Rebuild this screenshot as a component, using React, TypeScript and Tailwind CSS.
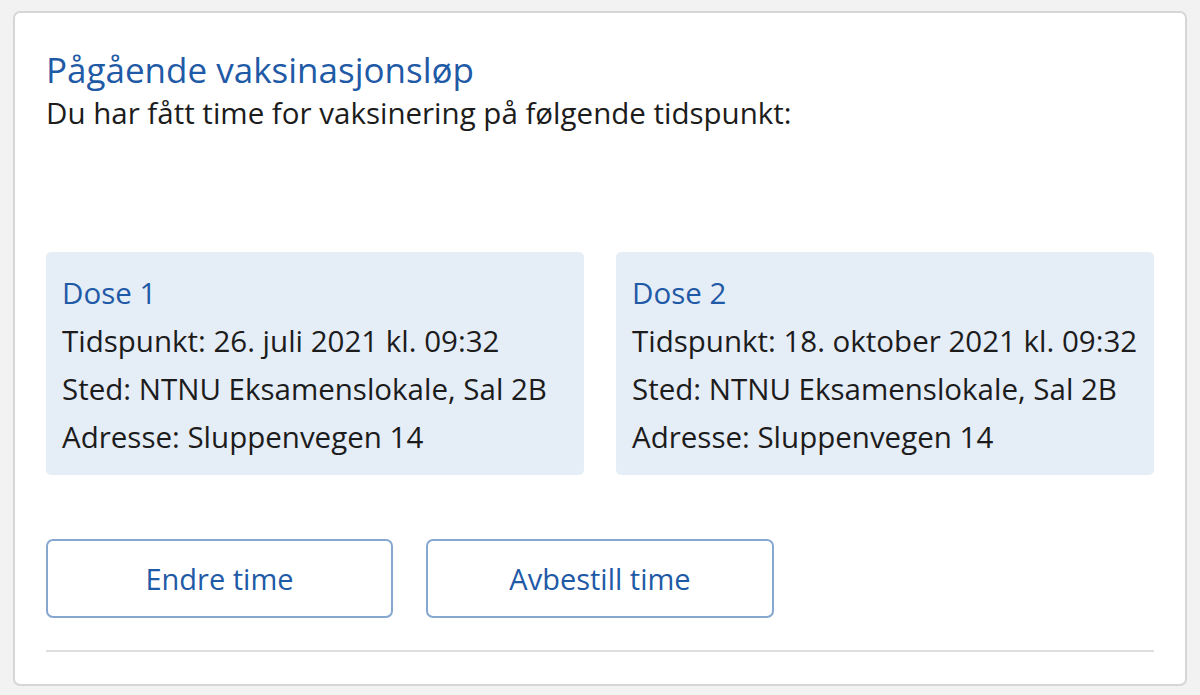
export default function App() {
  const doses = [
    { title: "Dose 1", time: "Tidspunkt: 26. juli 2021 kl. 09:32" },
    { title: "Dose 2", time: "Tidspunkt: 18. oktober 2021 kl. 09:32" },
  ];
  return (
    <div
      className="w-[1200px] h-[695px] bg-[#f2f2f2] pt-[11px] pl-[13px] pr-[13px] pb-[9px]"
      style={{ fontFamily: "'Open Sans', 'Noto Sans', sans-serif" }}
    >
      <div className="h-full bg-white border-2 border-[#d6d6d6] rounded-[7px] px-[31px] pt-[36px]">
        <h1 className="text-[35px] leading-[42px] text-[#1f5aa6]">Pågående vaksinasjonsløp</h1>
        <p className="text-[29.5px] leading-[44px] text-[#1c1c1c]">
          Du har fått time for vaksinering på følgende tidspunkt:
        </p>
        <div className="mt-[117px] grid grid-cols-2 gap-[32px]">
          {doses.map((d) => (
            <div key={d.title} className="bg-[#e5edf7] rounded-[5px] px-[16px] pt-[17px] pb-[14px] text-[29.5px] leading-[48px] text-[#1c1c1c]">
              <div className="text-[#1f5aa6]">{d.title}</div>
              <div>{d.time}</div>
              <div>Sted: NTNU Eksamenslokale, Sal 2B</div>
              <div>Adresse: Sluppenvegen 14</div>
            </div>
          ))}
        </div>
        <div className="mt-[64px] flex gap-[33px]">
          <button className="w-[347px] h-[79px] border-2 border-[#86a7d0] rounded-[7px] text-[29px] text-[#1f5aa6] bg-white">
            Endre time
          </button>
          <button className="w-[348px] h-[79px] border-2 border-[#86a7d0] rounded-[7px] text-[29px] text-[#1f5aa6] bg-white">
            Avbestill time
          </button>
        </div>
        <div className="mt-[32px] h-[2px] bg-[#dedede]"></div>
      </div>
    </div>
  );
}
